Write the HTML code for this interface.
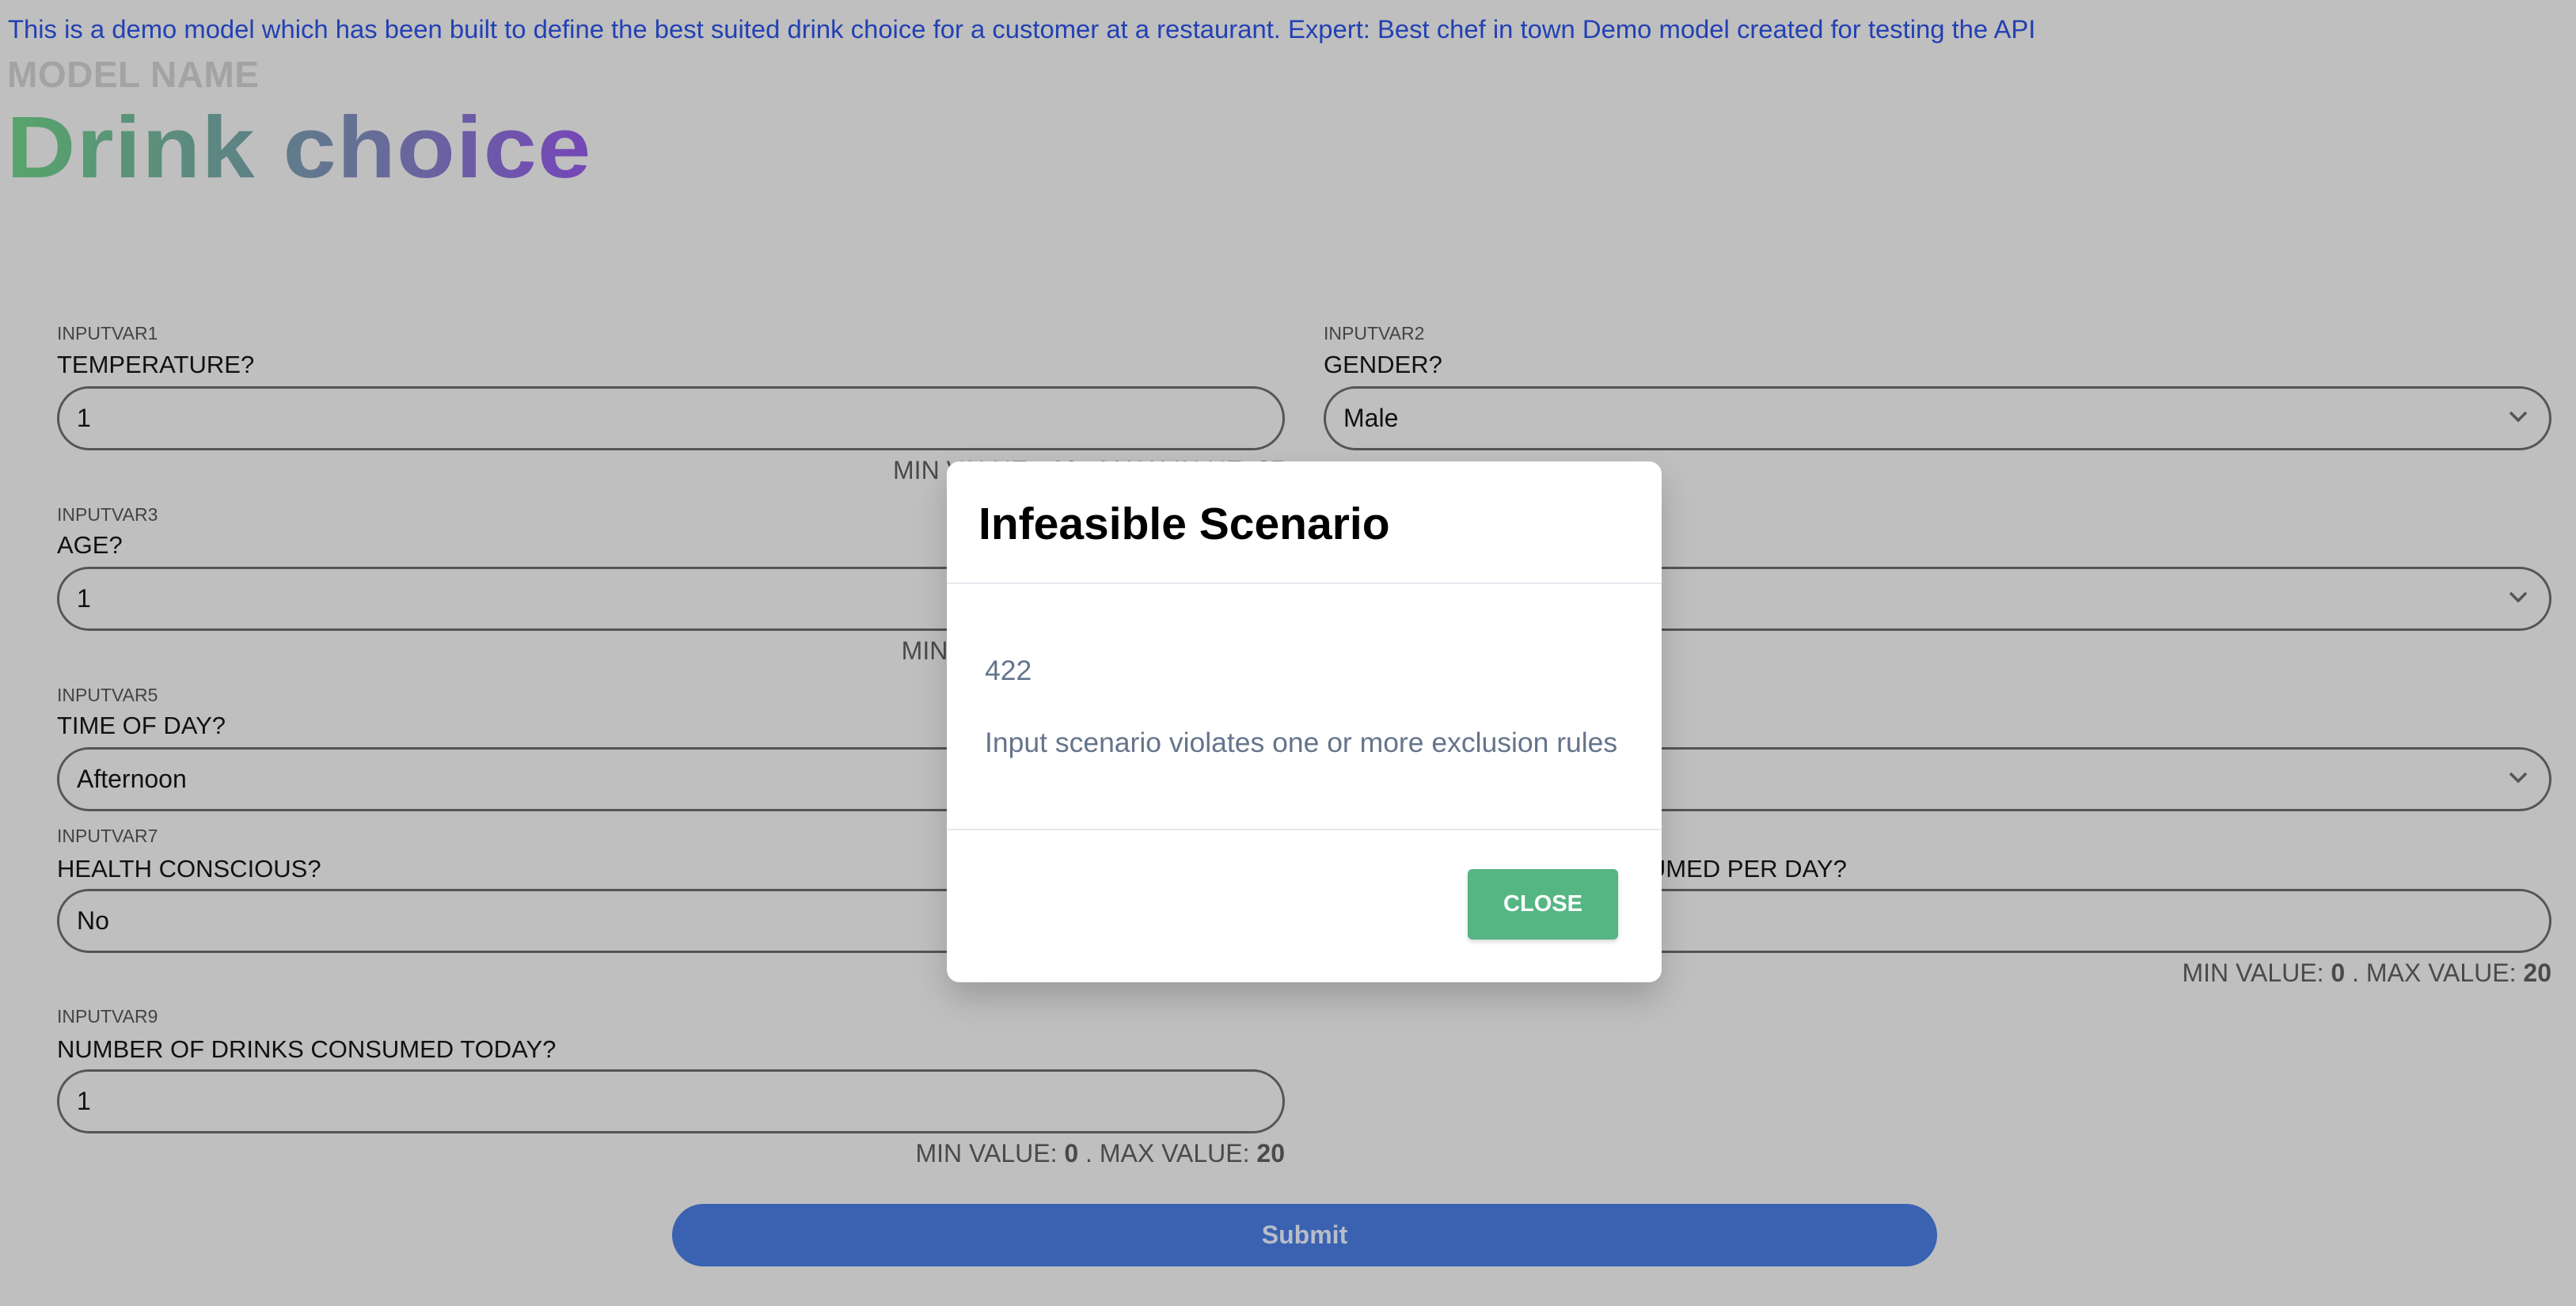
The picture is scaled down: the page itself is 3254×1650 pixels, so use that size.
<!DOCTYPE html>
<html><head><meta charset="utf-8"><style>
*{margin:0;padding:0;box-sizing:border-box}
body{width:3254px;height:1650px;background:#bfbfbf;position:relative;overflow:hidden;font-family:"Liberation Sans",Arial,sans-serif}
.a{position:absolute;white-space:nowrap}
.var{font-size:23px;color:#444;line-height:30px}
.lab{font-size:31px;color:#111;line-height:40px;font-weight:500}
.inp{height:81px;border:3px solid #555;border-radius:41px;font-size:32px;color:#111;line-height:75px;padding-left:22px}
.min{font-size:32px;color:#4a4a4a;line-height:40px;text-align:right;width:1551px}
.chev{position:absolute;right:26px;top:26px}
</style></head><body>
<div class="a" style="left:10px;top:17px;font-size:32.8px;color:#2241b3;line-height:40px">This is a demo model which has been built to define the best suited drink choice for a customer at a restaurant. Expert: Best chef in town Demo model created for testing the API</div>
<div class="a" style="left:9px;top:68px;font-size:46px;font-weight:bold;color:#a3a3a3;line-height:52px;letter-spacing:0.5px">MODEL NAME</div>
<div class="a" style="left:8px;top:122px;font-size:110px;font-weight:900;line-height:130px;letter-spacing:1px;transform:scaleX(1.1);transform-origin:0 0;background:linear-gradient(90deg,#56a56a,#5f7f88 45%,#7546b9);-webkit-background-clip:text;background-clip:text;color:transparent">Drink choice</div>

<!-- row 1 -->
<div class="a var" style="left:72px;top:406px">INPUTVAR1</div>
<div class="a lab" style="left:72px;top:441px">TEMPERATURE?</div>
<div class="a inp" style="left:72px;top:488px;width:1551px">1</div>
<div class="a min" style="left:72px;top:574px">MIN VALUE: <b>-10</b> . MAX VALUE: <b>35</b></div>
<div class="a var" style="left:1672px;top:406px">INPUTVAR2</div>
<div class="a lab" style="left:1672px;top:441px">GENDER?</div>
<div class="a inp" style="left:1672px;top:488px;width:1551px">Male<svg class="chev" width="26" height="18" viewBox="0 0 26 18"><path d="M3 4l10 10 10-10" fill="none" stroke="#555" stroke-width="3.5"/></svg></div>

<!-- row 2 -->
<div class="a var" style="left:72px;top:635px">INPUTVAR3</div>
<div class="a lab" style="left:72px;top:669px">AGE?</div>
<div class="a inp" style="left:72px;top:716px;width:1551px">1</div>
<div class="a min" style="left:72px;top:802px">MIN VALUE: <b>0</b> . MAX VALUE: <b>100</b></div>
<div class="a var" style="left:1672px;top:635px">INPUTVAR4</div>
<div class="a lab" style="left:1672px;top:669px">WEATHER?</div>
<div class="a inp" style="left:1672px;top:716px;width:1551px">Sunny<svg class="chev" width="26" height="18" viewBox="0 0 26 18"><path d="M3 4l10 10 10-10" fill="none" stroke="#555" stroke-width="3.5"/></svg></div>

<!-- row 3 -->
<div class="a var" style="left:72px;top:863px">INPUTVAR5</div>
<div class="a lab" style="left:72px;top:897px">TIME OF DAY?</div>
<div class="a inp" style="left:72px;top:944px;width:1551px">Afternoon</div>
<div class="a var" style="left:1672px;top:863px">INPUTVAR6</div>
<div class="a lab" style="left:1672px;top:897px">DAY OF WEEK?</div>
<div class="a inp" style="left:1672px;top:944px;width:1551px">Monday<svg class="chev" width="26" height="18" viewBox="0 0 26 18"><path d="M3 4l10 10 10-10" fill="none" stroke="#555" stroke-width="3.5"/></svg></div>

<!-- row 4 -->
<div class="a var" style="left:72px;top:1041px">INPUTVAR7</div>
<div class="a lab" style="left:72px;top:1078px">HEALTH CONSCIOUS?</div>
<div class="a inp" style="left:72px;top:1123px;width:1551px">No</div>
<div class="a var" style="left:1672px;top:1041px">INPUTVAR8</div>
<div class="a lab" style="left:1672px;top:1078px">NUMBER OF DRINKS CONSUMED PER DAY?</div>
<div class="a inp" style="left:1672px;top:1123px;width:1551px">1</div>
<div class="a min" style="left:1672px;top:1209px">MIN VALUE: <b>0</b> . MAX VALUE: <b>20</b></div>

<!-- row 5 -->
<div class="a var" style="left:72px;top:1269px">INPUTVAR9</div>
<div class="a lab" style="left:72px;top:1306px">NUMBER OF DRINKS CONSUMED TODAY?</div>
<div class="a inp" style="left:72px;top:1351px;width:1551px">1</div>
<div class="a min" style="left:72px;top:1437px">MIN VALUE: <b>0</b> . MAX VALUE: <b>20</b></div>

<div class="a" style="left:849px;top:1521px;width:1598px;height:79px;border-radius:40px;background:#3a62b1;color:#b8bdc9;font-size:32px;font-weight:bold;text-align:center;line-height:79px">Submit</div>

<!-- modal -->
<div class="a" style="left:1196px;top:583px;width:903px;height:658px;background:#fff;border-radius:16px;box-shadow:0 20px 40px rgba(0,0,0,0.18)">
  <div class="a" style="left:40px;top:42px;font-size:57px;font-weight:bold;color:#000;line-height:74px">Infeasible Scenario</div>
  <div class="a" style="left:0;top:153px;width:903px;height:2px;background:#e5e9ef"></div>
  <div class="a" style="left:48px;top:242px;font-size:35.5px;color:#64748b;line-height:44px">422</div>
  <div class="a" style="left:48px;top:333px;font-size:35.5px;color:#64748b;line-height:44px">Input scenario violates one or more exclusion rules</div>
  <div class="a" style="left:0;top:464px;width:903px;height:2px;background:#e5e9ef"></div>
  <div class="a" style="left:658px;top:515px;width:190px;height:89px;background:#55b683;border-radius:6px;color:#fff;font-size:29px;font-weight:bold;text-align:center;line-height:89px;box-shadow:0 3px 6px rgba(0,0,0,0.15)">CLOSE</div>
</div>
</body></html>
